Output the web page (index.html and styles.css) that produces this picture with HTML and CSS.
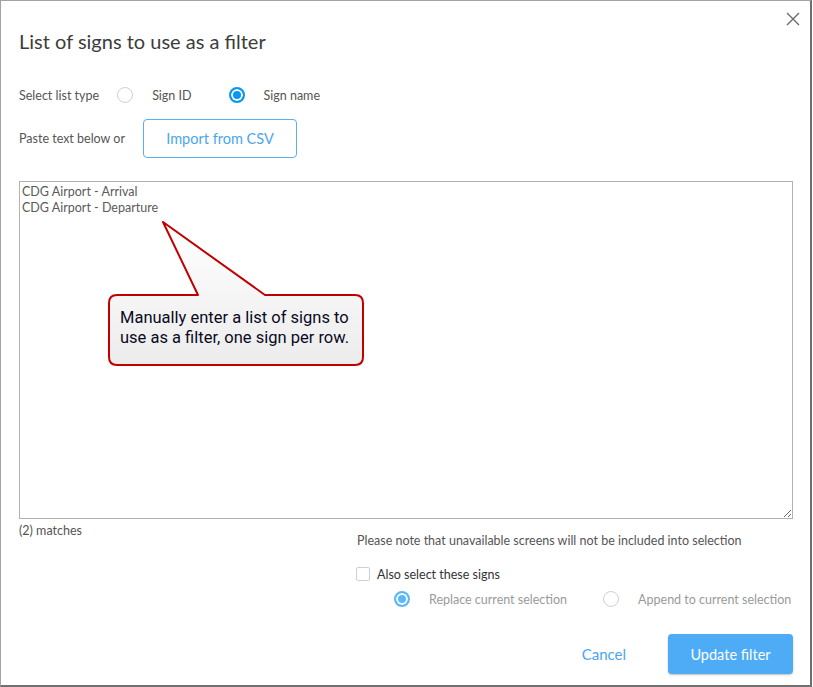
FILE: index.html
```html
<!DOCTYPE html>
<html>
<head>
<meta charset="UTF-8">
<title>List of signs to use as a filter</title>
<link rel="stylesheet" href="styles.css">
</head>
<body>
<div class="dialog">
<button class="close" aria-label="Close">
<svg width="14" height="14" viewBox="0 0 14 14"><path d="M1 1 L13 13 M13 1 L1 13" stroke="#6b6b6b" stroke-width="1.4" fill="none"/></svg>
</button>

<h1 class="title">List of signs to use as a filter</h1>

<div class="row type-row">
<span class="label">Select list type</span>
<label class="opt"><span class="radio"></span><span>Sign ID</span></label>
<label class="opt"><span class="radio on"></span><span>Sign name</span></label>
</div>

<div class="row paste-row">
<span class="label">Paste text below or</span>
<button class="btn-outline">Import from CSV</button>
</div>

<div class="editor">
<textarea class="signs" spellcheck="false">CDG Airport - Arrival
CDG Airport - Departure</textarea>
<div class="callout">
<svg class="callout-shape" width="260" height="150" viewBox="86 38 260 150">
<defs>
<linearGradient id="cg" x1="0" y1="0" x2="0" y2="1">
<stop offset="0" stop-color="#ffffff"/>
<stop offset="1" stop-color="#ececec"/>
</linearGradient>
</defs>
<path d="M98 114 L179 114 L144 41 L246 114 L336 114 Q344 114 344 122 L344 176 Q344 184 336 184 L98 184 Q90 184 90 176 L90 122 Q90 114 98 114 Z" fill="url(#cg)" stroke="#c00000" stroke-width="2" stroke-linejoin="round"/>
</svg>
<p class="callout-text">Manually enter a list of signs to use as a filter, one sign per row.</p>
</div>
</div>

<div class="info">
<div class="matches">(2) matches</div>
<div class="options">
<p class="note">Please note that unavailable screens will not be included into selection</p>
<label class="check-row"><span class="checkbox"></span><span>Also select these signs</span></label>
<div class="sub-opts">
<label class="opt muted"><span class="radio on soft"></span><span>Replace current selection</span></label>
<label class="opt muted"><span class="radio"></span><span>Append to current selection</span></label>
</div>
</div>
</div>

<div class="actions">
<button class="btn-link">Cancel</button>
<button class="btn-primary">Update filter</button>
</div>
</div>
</body>
</html>
```

FILE: styles.css
```css
html, body { margin: 0; padding: 0; background: #fff; }
body {
    font-family: Lato, "Open Sans", sans-serif;
    font-size: 12.5px;
    color: #555;
}
button { font-family: inherit; cursor: pointer; }

.dialog {
    position: relative;
    box-sizing: border-box;
    width: 812px;
    height: 687px;
    padding: 28px 17px 0 18px;
    border: 1px solid #a3a3a3;
    border-right: 2px solid #707070;
    border-bottom: 2px solid #707070;
    background: #fff;
}

.close {
    position: absolute;
    top: 11px;
    right: 10px;
    width: 14px;
    height: 14px;
    padding: 0;
    border: 0;
    background: none;
    line-height: 0;
}

.title {
    margin: 0;
    font-size: 20px;
    font-weight: normal;
    line-height: 24px;
    color: #3c3c3c;
}

.row { display: flex; align-items: center; white-space: nowrap; }
.type-row { margin-top: 30px; height: 24px; }
.paste-row { margin-top: 12px; }
.label { margin-right: 18px; }

.opt { display: flex; align-items: center; margin-right: 37px; white-space: nowrap; }
.opt .radio { margin-right: 19px; }

.radio {
    box-sizing: border-box;
    display: inline-block;
    flex: none;
    width: 16px;
    height: 16px;
    border: 1px solid #cfcfcf;
    border-radius: 50%;
    background: #fff;
}
.radio.on {
    border: 2px solid #0b95f2;
    background: #0b95f2;
    box-shadow: inset 0 0 0 2px #fff;
}
.radio.soft {
    border-color: #5bb9fb;
    background: #5bb9fb;
}

.btn-outline {
    width: 154px;
    height: 39px;
    border: 1px solid #5aaef2;
    border-radius: 4px;
    background: #fff;
    color: #4aa6f2;
    font-size: 14.5px;
}

.editor { position: relative; margin-top: 23px; }
.signs {
    display: block;
    box-sizing: border-box;
    width: 774px;
    height: 338px;
    margin: 0;
    padding: 2px;
    border: 1px solid #b2b2b2;
    font-family: Lato, sans-serif;
    font-size: 12.5px;
    line-height: 16px;
    color: #5a5a5a;
    resize: both;
    outline: none;
}

.callout { position: absolute; left: 0; top: 0; }
.callout-shape { position: absolute; left: 86px; top: 38px; }
.callout-text {
    position: absolute;
    left: 101px;
    top: 127px;
    width: 245px;
    margin: 0;
    font-family: Roboto, sans-serif;
    font-size: 16.5px;
    line-height: 20px;
    color: #0a0a1e;
}

.info { display: flex; }
.matches { width: 337px; margin-top: 4px; line-height: 16px; }
.options { flex: 1; }
.note { margin: 14px 0 0 1px; line-height: 16px; }
.check-row { display: flex; align-items: center; margin-top: 17px; height: 16px; color: #333; }
.checkbox {
    box-sizing: border-box;
    width: 14px;
    height: 14px;
    margin-right: 7px;
    border: 1px solid #cfcfcf;
    border-radius: 2px;
}
.sub-opts { display: flex; margin: 9px 0 0 38px; height: 16px; }
.muted { color: #9a9a9a; }
.sub-opts .opt { margin-right: 36px; }
.sub-opts .opt:last-child { margin-right: 0; }

.actions {
    display: flex;
    justify-content: flex-end;
    align-items: center;
    margin-top: 27px;
}
.btn-link {
    margin-right: 42px;
    padding: 0;
    border: 0;
    background: none;
    color: #4aa6f2;
    font-size: 15px;
}
.btn-primary {
    width: 125px;
    height: 40px;
    border: 0;
    border-radius: 4px;
    background: #4eabf6;
    color: #fff;
    font-size: 14.5px;
    box-shadow: 0 1px 2px rgba(0,0,0,0.25);
}
```
